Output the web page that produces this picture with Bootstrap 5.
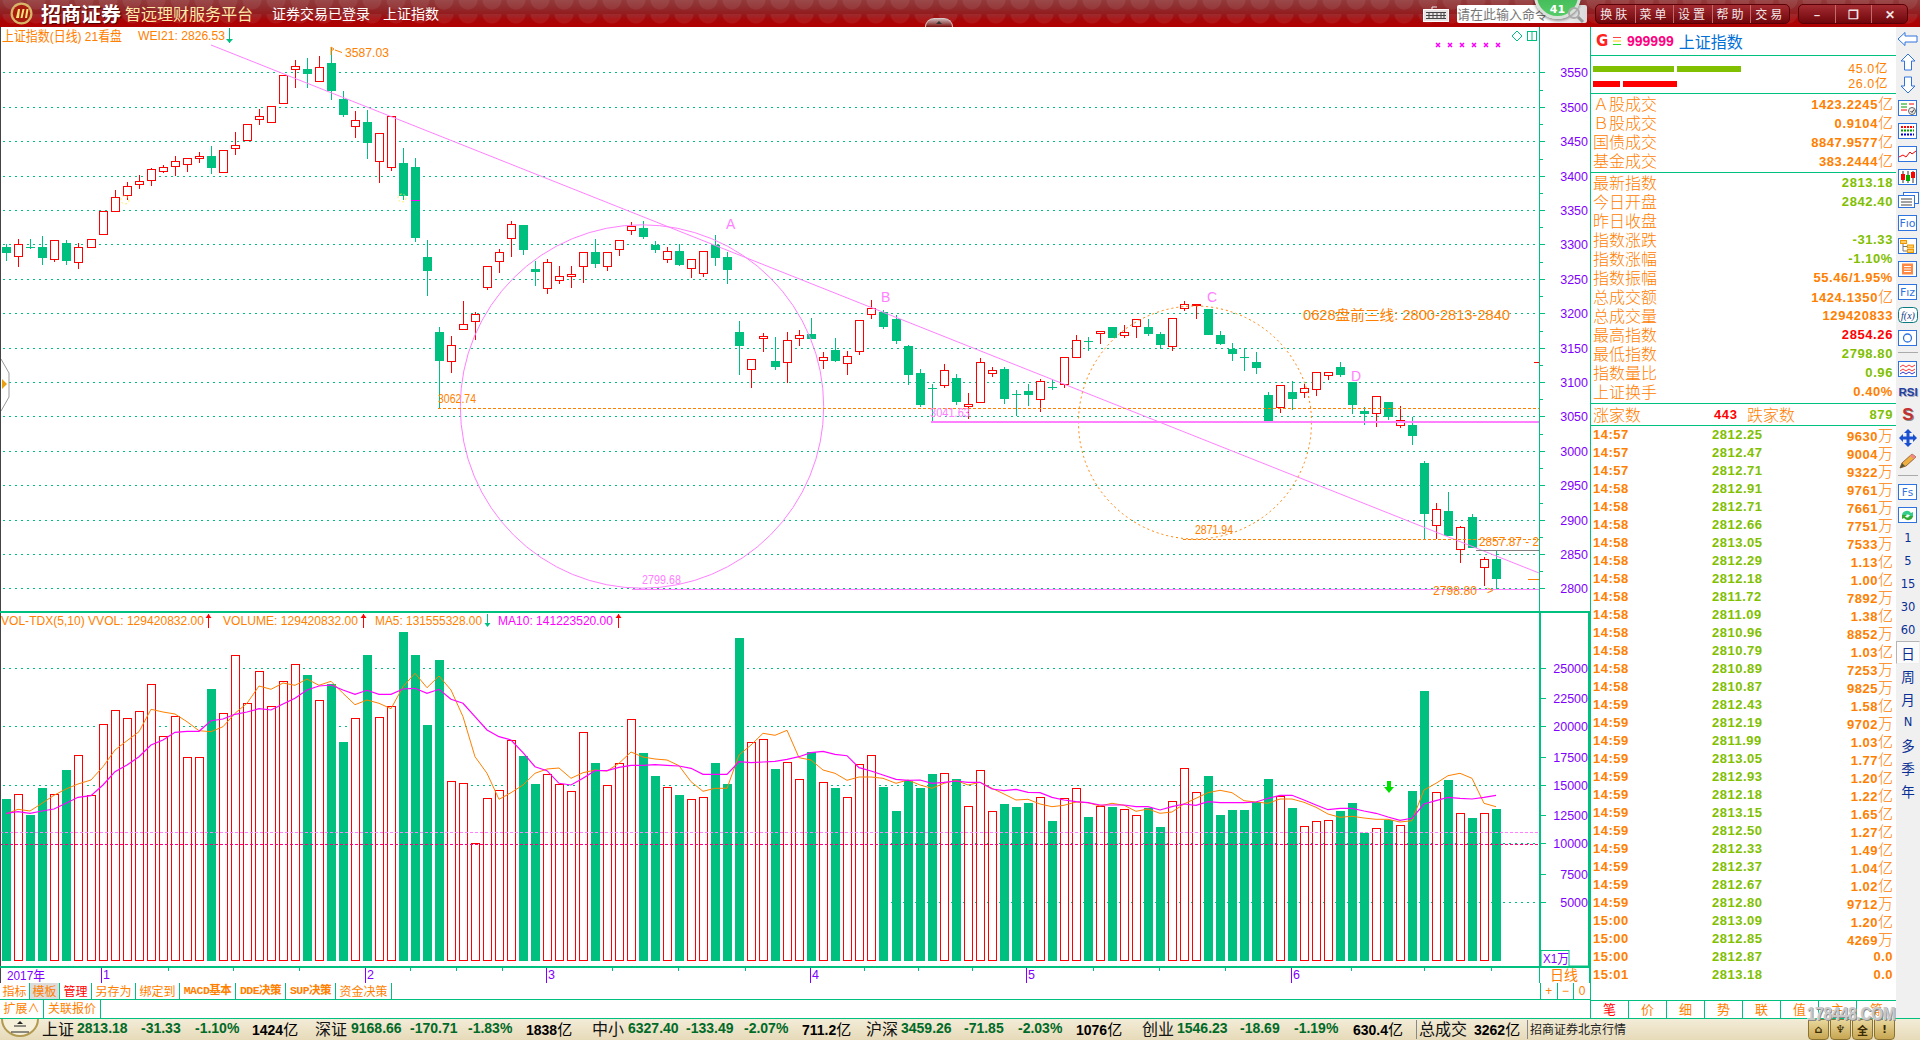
<!DOCTYPE html>
<html lang="zh">
<head>
<meta charset="utf-8">
<title>招商证券 智远理财服务平台</title>
<link href="https://cdn.jsdelivr.net/npm/bootstrap@5.3.0/dist/css/bootstrap.min.css" rel="stylesheet">
<style>
html,body{height:1040px;overflow:hidden;background:#fff;}
body{font-family:"Liberation Sans","Noto Sans CJK SC",sans-serif;font-size:13px;color:#ff8000;}
.cjk{font-family:"Noto Sans CJK SC",sans-serif;}
.app-shell{width:1920px;height:1040px;position:relative;overflow:hidden;}
/* title bar */
.title-bar{height:27px;position:relative;background:
 radial-gradient(circle at 12px 0,rgba(255,255,255,.07) 0 9px,transparent 10px) 0 0/24px 14px,
 linear-gradient(#923b3c 0,#8f2a2c 30%,#96181b 55%,#a70507 75%,#b30000 100%);color:#fff;}
.brand-logo{margin-left:10px;width:23px;height:23px;}
.brand-name{margin-left:8px;width:81px;font:700 20px/27px "Noto Sans CJK SC",sans-serif;letter-spacing:0;text-shadow:1px 1px 1px #400;}
.brand-sub{margin-left:3px;width:147px;font:400 16px/27px "Noto Sans CJK SC",sans-serif;color:#ffe9a8;}
.brand-state{width:111px;font:400 14px/27px "Noto Sans CJK SC",sans-serif;}
.brand-index{font:400 14px/27px "Noto Sans CJK SC",sans-serif;}
.notch{position:absolute;left:925px;top:18px;width:28px;height:9px;border-radius:14px 14px 0 0;background:linear-gradient(#c9b3b3,#7a0d0d);border:1px solid #d8c8c8;border-bottom:0;}
.notch::after{content:"";position:absolute;left:10px;top:2px;border:3px solid transparent;border-bottom-color:#333;border-top:0;}
.kbd-icon{position:absolute;left:1423px;top:6px;}
.cmd-box{position:absolute;left:1457px;top:5px;width:130px;height:18px;background:linear-gradient(90deg,#fff 70%,#d9d9d9);border-radius:2px;color:#777;font:400 13px/18px "Noto Sans CJK SC",sans-serif;overflow:hidden;white-space:nowrap;}
.cmd-glass{position:absolute;left:1566px;top:6px;}
.msg-ball{position:absolute;left:1534px;top:-28px;width:47px;height:47px;border-radius:50%;background:linear-gradient(#2fa84a,#55cc66);border:3px solid #d9dfd9;box-shadow:0 2px 3px rgba(0,0,0,.4);color:#fff;font:700 11px/1 "DejaVu Sans",sans-serif;text-align:center;padding-top:29px;}
.win-group{position:absolute;top:4px;height:20px;display:flex;border:1px solid #5a0006;border-radius:5px;background:linear-gradient(#a32c32,#6f060b);overflow:hidden;}
.win-group span{display:block;border-left:1px solid #c46a6a;text-align:center;color:#f2e4e4;font:400 12px/18px "Noto Sans CJK SC",sans-serif;letter-spacing:3px;}
.win-group span:first-child{border-left:0;}
.group-menu{left:1595px;width:195px;}
.group-menu span{width:39px;}
.group-win{left:1798px;width:110px;}
.group-win span{width:37px;font-weight:700;letter-spacing:0;}
/* body */
.main-area{height:992px;border-bottom:1px solid #00c080;}
.chart-col{width:1590px;}
.chart-svg{display:block;width:1590px;height:956px;}
.tool-row{display:flex;border-bottom:1px solid #00c080;font:400 12px/16px "Noto Sans CJK SC",sans-serif;color:#ff8000;white-space:nowrap;}
.tool-a{height:17px;}
.tool-b{height:18px;border-bottom:0;}
.tool-cell{display:block;text-align:center;border-right:1px solid #00c080;}
.tool-cell.sel{background:#dcdcdc;color:#ff8000;}
.tool-cell.warn{color:#f00;}
.tool-mono{font:700 11.5px/16px "Liberation Mono","Noto Sans CJK SC",monospace;letter-spacing:-.5px;}
.tool-end{margin-left:auto;width:50px;display:flex;border-left:1px solid #00c080;}
.tool-end span{flex:1;text-align:center;border-right:1px solid #00c080;font-family:"Liberation Sans",sans-serif;}
.tool-end span:last-child{border-right:0;}
/* info */
.info-col{width:306px;border-left:1px solid #00c080;}
.sec{border-bottom:1px solid #00c080;padding:0 3px 0 2px;}
.sec-head{height:29px;padding-left:5px;align-items:center;}
.code-g{color:#f22;font:700 15px "DejaVu Sans",sans-serif;width:17px;}
.code-lines{width:8px;margin:0 6px 0 0;}
.code-num{color:#ff0080;font:700 14px "Liberation Sans",sans-serif;margin-right:5px;}
.code-name{color:#0070d8;font:400 16px "Noto Sans CJK SC",sans-serif;}
.sec-bars{height:38px;position:relative;}
.bar-row{display:flex;height:15px;align-items:center;}
.bar-seg{height:6px;margin-right:3px;}
.seg-g{background:#80c000;}
.seg-r{background:#f00;}
.w81{width:81px;}.w64{width:64px;}.w27{width:27px;}.w54{width:54px;}
.bar-num{margin-left:auto;margin-right:5px;font-size:12.5px;letter-spacing:.6px;}
.bar-wrap{padding-top:5px;}
.row-19{height:19px;line-height:19px;display:flex;justify-content:space-between;}
.lbl{font:300 16px/19px "Noto Sans CJK SC",sans-serif;letter-spacing:0;}
.val{font:700 13px/19px "Liberation Sans",sans-serif;letter-spacing:.6px;}
.val i,.tk-v i{font:300 15px/18px "Noto Sans CJK SC",sans-serif;letter-spacing:0;}
.c-g{color:#80c000;}.c-r{color:#f00;}.c-o{color:#ff8000;}
.sec-st{height:79px;}
.sec-in{height:231px;}
.sec-ud{height:22px;padding-top:1px;}
.ud-a{width:121px;}
.ud-b{width:91px;text-align:left;}
.tk-list{height:558px;padding:0 3px 0 2px;}
.tk-row{height:18px;line-height:18px;font:700 13px/18px "Liberation Sans",sans-serif;letter-spacing:.5px;display:flex;}
.tk-t{width:119px;}
.tk-p{width:100px;color:#80c000;}
.tk-v{flex:1;text-align:right;}
.tab-row{height:18px;border-top:1px solid #00c080;margin-top:auto;display:flex;font:400 13px/16px "Noto Sans CJK SC",sans-serif;}
.tab-row span{width:38px;text-align:center;border-right:1px solid #00c080;}
.tab-row span:last-child{border-right:0;width:39px;}
.watermark{position:absolute;left:1807px;top:1005px;color:#c8c8c8;font:700 18px/1 "Liberation Sans",sans-serif;letter-spacing:-.3px;text-shadow:1px 1px 0 #888,-1px 0 0 #eee;transform:scaleX(.85);transform-origin:left center;white-space:nowrap;}
/* side */
.side-col{width:24px;background:#f0f0f0;}
.side-cell{height:23px;display:flex;align-items:center;justify-content:center;color:#0a2f94;font:400 11.5px "DejaVu Sans",sans-serif;}
.side-cell.cjk{font:400 13.5px "Noto Sans CJK SC",sans-serif;}
.side-cell.on{background:#fafafa;border:1px solid #b5b5b5;border-right-color:#eee;border-bottom-color:#eee;}
.side-sep{height:8px;position:relative;}
.side-sep::after{content:"";position:absolute;left:2px;right:2px;top:3px;border-top:1px solid #aaa;}
/* status */
.status-bar{height:21px;background:linear-gradient(#f3ecd8,#e6dab8);color:#000;white-space:nowrap;position:relative;line-height:19px;}
.st-item{display:block;flex:none;overflow:visible;}
.st-cn{font:400 16px/19px "Noto Sans CJK SC",sans-serif;color:#111;}
.st-num{font:700 14px/19px "Liberation Sans",sans-serif;color:#006a28;}
.st-amt{font:700 14px/19px "Liberation Sans",sans-serif;color:#000;}
.st-amt i{font:400 15px/19px "Noto Sans CJK SC",sans-serif;}
.st-sep{border-left:1px solid #888;height:19px;margin-top:1px;}
.st-home{font:400 12px/20px "Noto Sans CJK SC",sans-serif;color:#222;}
.st-icons{position:absolute;left:1808px;top:0;display:flex;gap:1px;}
.st-ico{width:21px;height:21px;background:linear-gradient(#e8d79c,#c7a652);border:1px solid #8a7230;border-radius:0 0 4px 4px;display:flex;align-items:center;justify-content:center;color:#3a2a00;font:700 11px "DejaVu Sans","Noto Sans CJK SC",sans-serif;}
</style>
</head>
<body class="m-0 p-0">
<div class="app-shell d-flex flex-column">

<header class="title-bar d-flex align-items-center flex-shrink-0">
  <svg class="brand-logo" viewBox="0 0 23 23"><circle cx="11.5" cy="11.5" r="11" fill="#d9b56a"/><circle cx="11.5" cy="11.5" r="8.7" fill="#a81c10"/><path d="M6 16 8 7h2l-1 9zM10.500 16l2-9h2l-2 9zM15 16l1.500-9h2l-1.500 9z" fill="#ffe27a"/></svg>
  <div class="brand-name">招商证券</div>
  <div class="brand-sub">智远理财服务平台</div>
  <div class="brand-state">证券交易已登录</div>
  <div class="brand-index">上证指数</div>
  <div class="notch"></div>
  <svg class="kbd-icon" width="26" height="16" viewBox="0 0 26 16"><rect x=".5" y="3.500" width="25" height="12" fill="#e9e4e4" stroke="#fff"/><path d="M3 6.500h20M3 9.500h20M3 12.500h20M6 6v7M10 6v7M14 6v7M18 6v7M21 6v7" stroke="#444" stroke-width="1"/><path d="M9 3V1h5" stroke="#eee" fill="none"/></svg>
  <div class="cmd-box">请在此输入命令</div>
  <div class="msg-ball">41</div>
  <svg class="cmd-glass" width="20" height="18" viewBox="0 0 20 18"><circle cx="8" cy="7" r="5" fill="none" stroke="#aaa" stroke-width="2"/><path d="M12 11l5 5" stroke="#999" stroke-width="3"/></svg>
  <div class="win-group group-menu"><span>换肤</span><span>菜单</span><span>设置</span><span>帮助</span><span>交易</span></div>
  <div class="win-group group-win"><span>–</span><span>❐</span><span>✕</span></div>
</header>

<main class="main-area d-flex flex-shrink-0">
  <section class="chart-col d-flex flex-column flex-shrink-0">
    <svg id="chart" class="chart-svg" viewBox="0 27 1590 956" xmlns="http://www.w3.org/2000/svg"></svg>
    <div class="tool-row tool-a" id="toolA"></div>
    <div class="tool-row tool-b">
      <span class="tool-cell" style="width:44px">扩展∧</span>
      <span class="tool-cell" style="width:57px">关联报价</span>
    </div>
  </section>

  <aside class="info-col d-flex flex-column flex-shrink-0">
    <div class="sec sec-head d-flex">
      <span class="code-g">G</span>
      <svg class="code-lines" width="8" height="10" viewBox="0 0 8 10"><path d="M0 1.500h8" stroke="#f44"/><path d="M0 5h8" stroke="#fc0"/><path d="M0 8.500h8" stroke="#2d2"/></svg>
      <span class="code-num">999999</span><span class="code-name">上证指数</span>
    </div>
    <div class="sec sec-bars bar-wrap">
      <div class="bar-row"><span class="bar-seg seg-g w81"></span><span class="bar-seg seg-g w64"></span><span class="bar-num cjk-mix">45.0<i class="cjk fst-normal">亿</i></span></div>
      <div class="bar-row"><span class="bar-seg seg-r w27"></span><span class="bar-seg seg-r w54"></span><span class="bar-num">26.0<i class="cjk fst-normal">亿</i></span></div>
    </div>
    <div class="sec sec-st" id="stockRows"></div>
    <div class="sec sec-in" id="indexRows"></div>
    <div class="sec sec-ud d-flex">
      <span class="lbl ud-a">涨家数</span>
      <span class="val c-r" style="width:33px">443</span>
      <span class="lbl ud-b">跌家数</span>
      <span class="val c-g flex-grow-1 text-end">879</span>
    </div>
    <div class="tk-list" id="ticks"></div>
    <div class="tab-row"><span class="c-r">笔</span><span>价</span><span>细</span><span>势</span><span>联</span><span>值</span><span>主</span><span>筹</span></div>
  </aside>

  <nav class="side-col d-flex flex-column flex-shrink-0 pt-0" id="side"></nav>
</main>

<footer class="status-bar d-flex flex-shrink-0" id="status"></footer>
<div class="watermark">178448.COM</div>
</div>

<script src="https://cdn.jsdelivr.net/npm/bootstrap@5.3.0/dist/js/bootstrap.bundle.min.js"></script>
<script>
(function(){
var G='#00c080',R='#ff0000',O='#ff8000',P='#ff80ff',M='#ff00ff',V='#8000ff';
var X=function(i){return Math.round(6.4+12.015*i);};
/* first 35 candles read in zoomed units: y=20+v/3 */
var c0=[['g',682,698,672,722],['r',673,712,657,740],['g',680,683,657,687],['g',682,713,648,735],['r',661,721,661,725],['g',670,722,660,735],['r',682,730,670,746],['r',658,685,658,685],['r',574,646,574,646],['r',532,577,510,577],['r',497,529,487,540],['r',484,496,465,506],['r',448,484,444,497],['r',440,455,435,458],['r',424,440,408,468],['r',415,436,415,455],['r',409,418,396,428],['g',408,443,378,461],['r',391,460,391,460],['r',376,388,336,404],['r',313,364,313,364],['r',287,301,267,314],['r',259,310,259,310],['r',166,253,166,253],['r',139,151,120,203],['g',148,161,114,203],['r',142,187,108,187],['g',129,213,85,239],['g',237,285,213,291],['r',301,322,273,353],['g',306,368,270,416],['r',340,427,340,488],['r',287,445,287,452],['g',430,527,384,540],['g',441,653,414,665]];
var cs=c0.map(function(a){return [a[0],20+a[1]/3,20+a[2]/3,20+a[3]/3,20+a[4]/3];});
cs=cs.concat([
['g',257,271,240,296],['g',332,361,327,408],['r',345,362,336,373],['r',324,330,301,330],['r',314,322,312,340],['r',266,288,266,290],['r',252,262,249,273],['r',224,239,221,257],['g',225,250,225,255],['g',269,272,261,286],['r',262,289,259,294],['r',276,281,266,284],['r',274,276,266,288],['r',252,267,252,283],['g',252,264,239,268],['r',252,267,252,271],['r',240,250,240,256],
['r',226,231,222,235],['g',228,237,221,239],['g',245,250,241,253],['r',251,260,247,263],['g',251,265,244,266],['r',259,269,259,278],['r',251,274,251,277],['g',245,258,235,266],['g',257,270,252,284],['g',332,346,321,375],['r',359,370,359,388],['r',336,338,333,352],['g',361,367,337,370],['r',340,363,332,383],['r',335,339,330,346],['g',334,339,318,339],
['r',357,361,352,369],['g',350,361,338,362],['r',356,364,351,375],['r',320,352,320,355],['r',308,315,300,319],['g',312,327,310,329],['g',319,341,315,344],['g',346,375,345,385],['g',373,405,369,407],['g',388,389,384,422],['r',370,386,364,388],['g',378,402,374,405],['r',404,407,393,419],['r',362,403,358,403],['r',370,374,367,377],['g',369,399,367,404],['g',394,395,390,416],['g',391,395,384,406],['r',381,400,379,412],['g',387,388,380,390],['r',357,385,357,388],['r',340,358,335,358],['g',341,342,337,351],['r',331,334,331,344],['g',327,338,327,338],['r',332,336,325,338],['r',319,327,319,338],['g',327,334,319,336],['g',334,345,332,349],['r',318,347,318,351],['r',304,309,301,311],['r',304,305,304,319],['g',309,335,309,335],['g',335,344,331,345],['g',349,354,343,361],['g',357,358,348,371],['g',362,368,352,374],['g',395,422,392,422],['r',385,408,385,413],['g',392,399,381,410],['r',388,393,384,398],['r',372,390,372,396],['r',372,376,372,380],['g',367,375,362,377],['g',382,405,382,414],['g',411,414,407,425],['r',396,414,396,427],['g',402,417,402,420],['r',420,426,406,428],['g',425,436,417,445],['g',463,514,461,539],['r',509,526,503,539],['g',511,536,492,536],['r',527,550,526,563],['g',517,548,514,548],['r',559,568,557,586],['g',559,579,551,589]]);
/* volume tops in zoomed units: y=610+v/3 */
var vol=[['g',567],['r',553],['g',615],['g',534],['r',553],['g',480],['r',436],['r',556],['r',343],['r',301],['r',325],['r',304],['r',223],['r',379],['r',319],['r',442],['r',442],['g',237],['r',310],['r',136],['r',280],['r',184],['r',289],['r',214],['r',163],['g',195],['r',271],['g',222],['g',396],['r',325],['g',135],['r',322],['r',289],['g',66],['g',135],['g',345],['g',150],['r',514],['r',520],['r',700],['r',565],['r',541],['r',391],['g',438],['g',522],['r',493],['r',523],['r',544],['r',367],['g',459],['r',526],['r',460],['r',328],['g',429],['g',498],['r',532],['g',555],['r',568],['r',562],['g',459],['g',522],['g',84],['r',397],['r',388],['g',477],['r',456],['r',508],
['g',426],['r',517],['g',534],['r',562],['r',463],['r',436],['g',531],['g',603],['g',513],['g',534],['g',492],['r',490],['g',507],['r',589],['r',481],['r',604],['g',582],['g',591],['g',579],['r',562],['g',633],['r',565],['r',535],['g',621],['r',589],['g',591],['r',598],['r',616],['g',593],['g',651],['r',574],['r',475],['r',547],['g',498],['g',615],['g',600],['g',600],['g',575],['g',507],['r',558],['g',594],['r',649],['r',634],['r',631],['g',603],['g',579],['g',669],['r',655],['g',630],['r',646],['g',543],['g',243],['r',547],['g',510],['r',610],['g',624],['r',610],['g',597]];
var ma5=[612,598,603,580,556,537,522,510,470,420,392,365,298,306,312,335,362,365,350,310,280,228,238,219,226,207,226,214,250,284,270,280,296,230,190,233,198,240,320,440,490,568,548,525,490,477,474,505,488,480,483,460,426,441,447,450,467,515,544,535,535,435,405,370,376,361,443,450,480,490,511,501,501,505,520,510,525,535,520,511,525,517,535,552,570,568,582,590,586,576,578,588,580,586,604,597,610,606,582,565,548,541,548,572,576,580,567,567,577,592,612,622,619,624,628,628,636,632,540,520,497,490,505,580,590];
var ma10=[610,605,610,603,597,580,562,557,525,485,465,440,405,390,367,364,364,332,327,313,306,296,300,282,265,240,228,225,240,253,241,253,253,237,235,250,238,268,280,320,360,380,390,428,470,482,520,525,505,482,482,472,466,466,464,466,468,475,493,493,493,455,458,456,454,448,440,428,424,433,437,473,483,495,508,511,510,520,517,513,517,517,537,542,538,547,548,562,570,575,578,585,585,585,590,590,600,590,582,586,575,578,578,578,576,565,556,556,570,585,599,595,595,603,610,621,631,625,582,572,562,565,567,562,556];

var h=[];
function line(x1,y1,x2,y2,c,extra){h.push('<line x1="'+x1+'" y1="'+y1+'" x2="'+x2+'" y2="'+y2+'" stroke="'+c+'" '+(extra||'')+'/>');}
function hl(x1,y,x2,c,extra){line(x1,y+.5,x2,y+.5,c,(extra||'')+' shape-rendering="crispEdges"');}
function vl(x,y1,y2,c){line(x+.5,y1,x+.5,y2,c,'shape-rendering="crispEdges"');}
function txt(x,y,s,c,size,len,anchor,fam){
  h.push('<text x="'+x+'" y="'+y+'" fill="'+c+'" font-size="'+size+'" font-family="'+(fam||'Liberation Sans,Noto Sans CJK SC,sans-serif')+'" dominant-baseline="central"'+(anchor?' text-anchor="'+anchor+'"':'')+(len?' textLength="'+len+'" lengthAdjust="spacingAndGlyphs"':'')+'>'+s+'</text>');
}
var dot='stroke-dasharray="2 4"';
/* price grid and axis */
var gy=[72,107,141,176,210,244,279,313,348,382,416,451,485,520,554,588];
gy.forEach(function(y,k){
  hl(3,y,1539,G,dot);
  hl(1539,y,1545,G);
  if(k<gy.length-1){hl(1539,Math.round((y+gy[k+1])/2),1543,G);}
  txt(1588,y+.5,3550-50*k,V,12.5,null,'end');
});
vl(1539,27,612,G);
/* volume pane grid */
var vy=[668,698,726,757,785,815,843,874,902];
var vl2=[25000,22500,20000,17500,15000,12500,10000,7500,5000];
[668,726,785,902].forEach(function(y){hl(3,y,1539,G,dot);});
hl(3,843,1539,G,dot);
vy.forEach(function(y,k){hl(1541,y,1546,G);txt(1588,y+.5,vl2[k],V,12.5,null,'end');});
/* volume bars */
vol.forEach(function(v,i){
  var x=X(i)-4,y=Math.round(610+v[1]/3);
  if(v[0]=='g'){h.push('<rect x="'+x+'" y="'+y+'" width="9" height="'+(961-y)+'" fill="'+G+'" shape-rendering="crispEdges"/>');}
  else{h.push('<rect x="'+(x+.5)+'" y="'+(y+.5)+'" width="8" height="'+(960-y)+'" fill="#fff" stroke="'+R+'" shape-rendering="crispEdges"/>');}
});
/* candles */
cs.forEach(function(c,i){
  var x=X(i),col=c[0]=='g'?G:R,t=Math.round(c[1]),b=Math.max(Math.round(c[2]),t+1),wt=Math.round(c[3]),wb=Math.round(c[4]);
  vl(x,wt,wb,col);
  if(c[0]=='g'){h.push('<rect x="'+(x-4)+'" y="'+t+'" width="9" height="'+(b-t)+'" fill="'+G+'" shape-rendering="crispEdges"/>');}
  else{h.push('<rect x="'+(x-3.5)+'" y="'+(t+.5)+'" width="8" height="'+(b-t-(b-t>2?1:0))+'" fill="#fff" stroke="'+R+'" shape-rendering="crispEdges"/>');}
});
/* volume averages */
function poly(a,c,w){h.push('<polyline fill="none" stroke="'+c+'" stroke-width="'+w+'" points="'+a.map(function(v,i){return X(i)+','+(610+v/3).toFixed(1);}).join(' ')+'"/>');}
poly(ma5,O,1);poly(ma10,M,1.2);
hl(0,832,1539,P,'stroke-dasharray="3 2"');
hl(0,844,1539,'#ff0080','stroke-dasharray="3 2"');
/* drawings */
line(211,45,1539,573,P,'stroke-width="1"');
h.push('<circle cx="642" cy="406.500" r="181.700" fill="none" stroke="'+P+'"/>');
h.push('<circle cx="1195" cy="422.500" r="116.500" fill="none" stroke="'+O+'" stroke-dasharray="2 3"/>');
hl(438,408,1539,O,'stroke-dasharray="3 2"');
hl(931,422,1539,P);hl(931,421,1539,P);
hl(1183,539,1539,O,'stroke-dasharray="3 2"');
hl(1476,550,1539,'#808080');
hl(632,589,1539,P);
hl(1528,579,1539,O);
hl(1534,362,1539,R);
hl(X(34)-4,200,X(34)+5,M);
h.push('<circle cx="125" cy="200" r="4" fill="none" stroke="#ffee66" stroke-dasharray="2 2"/><circle cx="402" cy="198" r="4" fill="none" stroke="#ffee66" stroke-dasharray="2 2"/>');
/* labels */
txt(2,36,'上证指数(日线) 21看盘',O,13.5,120);
txt(138,36,'WEI21: 2826.53',O,12.5,87);
vl(229,28,43,G);h.push('<path d="M226 39h7l-3.500 4z" fill="'+G+'"/>');
txt(345,52.500,'3587.03',O,12.5,44);
h.push('<path d="M331 55V47l3 2-3 2M335 50l7 2.500" stroke="'+O+'" fill="none"/>');
txt(438,399,'3062.74',O,12,38);
txt(642,580,'2799.68',P,12,39);
txt(930,412.500,'3041.63',P,12,40);
txt(1195,530,'2871.94',O,12,38);
txt(1479,541.500,'2857.87 - 2',O,12,60);
txt(1433,590.500,'2798.80',O,12,44);
txt(1487,590,'&gt;',O,11);
txt(1303,315,'0628盘前三线: 2800-2813-2840',O,14,207);
txt(726,224,'A',P,14);txt(881,297,'B',P,14);txt(1207,297,'C',P,14);txt(1351,376,'D',P,14);
/* top right marks */
[1438,1450,1462,1474,1486,1498].forEach(function(x){h.push('<path d="M'+(x-2)+' 43l4 4M'+(x+2)+' 43l-4 4" stroke="'+M+'" stroke-width="1.500"/>');});
h.push('<path d="M1517 31l5 5-5 5-5-5z" fill="none" stroke="'+G+'"/><rect x="1527.500" y="31.500" width="9" height="9" fill="none" stroke="'+G+'"/><path d="M1532 32v8" stroke="'+G+'" stroke-width="1"/>');
/* left handle */
h.push('<path d="M1 359l8 14v24l-8 14" fill="#fff" stroke="#999"/><path d="M2 379l5 5-5 5z" fill="#e8a010"/>');
/* left frame */
vl(0,27,983,'#444');
/* pane text */
hl(0,612,1540,G);hl(0,611,1540,G);
txt(1,620.500,'VOL-TDX(5,10) VVOL: 129420832.00',O,12,203);
txt(223,620.500,'VOLUME: 129420832.00',O,12,135);
txt(375,620.500,'MA5: 131555328.00',O,12,107);
txt(498,620.500,'MA10: 141223520.00',M,12,115);
function upArrow(x){vl(x,614,628,R);h.push('<path d="M'+(x-2.500)+' 618h6l-3-4z" fill="'+R+'"/>');}
upArrow(208);upArrow(363);upArrow(618);
vl(487,614,626,G);h.push('<path d="M484.500 623h6l-3 4z" fill="'+G+'"/>');
/* green signal arrow */
h.push('<path d="M1387 781h4v6h3l-5 6-5-6h3z" fill="#00e000"/>');
/* volume axis box */
h.push('<rect x="1540" y="612" width="49" height="354.500" fill="none" stroke="'+G+'" stroke-width="2"/>');
h.push('<rect x="1541" y="950.500" width="28" height="16" fill="#fff" stroke="'+G+'"/>');
txt(1543,958,'X1万',V,13,26);
/* date axis */
hl(0,966,1540,G);hl(0,967,1590,G);
txt(7,975,'2017年',V,13,38);
[[101,'1'],[365,'2'],[546,'3'],[810,'4'],[1026,'5'],[1291,'6']].forEach(function(a){vl(a[0],968,983,V);txt(a[0]+2,975,a[1],V,12.5);});
[168,233,299,410,456,502,612,678,745,864,918,972,1093,1159,1225,1351,1424,1491].forEach(function(x){vl(x,968,971,G);});
vl(1539,967,983,G);vl(1589,967,983,G);
txt(1564,975,'日线',O,14,null,'middle');
document.getElementById('chart').innerHTML=h.join('');

/* toolbar */
var tools=[['指标',30],['模板',30,'sel'],['管理',32,'warn'],['另存为',44],['绑定到',44],['MACD基本',56,'tool-mono'],['DDE决策',50,'tool-mono'],['SUP决策',50,'tool-mono'],['资金决策',56]];
var ta=tools.map(function(t){return '<span class="tool-cell '+(t[2]||'')+'" style="width:'+t[1]+'px">'+t[0]+'</span>';}).join('');
document.getElementById('toolA').innerHTML=ta+'<div class="tool-end"><span>+</span><span>−</span><span>0</span></div>';

/* info rows */
function unit(v){return v.replace(/([亿万])/,'<i class="fst-normal">$1</i>');}
function rows(a){return a.map(function(r){return '<div class="row-19"><span class="lbl">'+r[0]+'</span><span class="val c-'+r[2]+'">'+unit(r[1])+'</span></div>';}).join('');}
document.getElementById('stockRows').innerHTML=rows([['Ａ股成交','1423.2245亿','o'],['Ｂ股成交','0.9104亿','o'],['国债成交','8847.9577亿','o'],['基金成交','383.2444亿','o']]);
document.getElementById('indexRows').innerHTML=rows([['最新指数','2813.18','g'],['今日开盘','2842.40','g'],['昨日收盘','','g'],['指数涨跌','-31.33','g'],['指数涨幅','-1.10%','g'],['指数振幅','55.46/1.95%','o'],['总成交额','1424.1350亿','o'],['总成交量','129420833','o'],['最高指数','2854.26','r'],['最低指数','2798.80','g'],['指数量比','0.96','g'],['上证换手','0.40%','o']]);
var tk='14:57 2812.25 9630万|14:57 2812.47 9004万|14:57 2812.71 9322万|14:58 2812.91 9761万|14:58 2812.71 7661万|14:58 2812.66 7751万|14:58 2813.05 7533万|14:58 2812.29 1.13亿|14:58 2812.18 1.00亿|14:58 2811.72 7892万|14:58 2811.09 1.38亿|14:58 2810.96 8852万|14:58 2810.79 1.03亿|14:58 2810.89 7253万|14:58 2810.87 9825万|14:59 2812.43 1.58亿|14:59 2812.19 9702万|14:59 2811.99 1.03亿|14:59 2813.05 1.77亿|14:59 2812.93 1.20亿|14:59 2812.18 1.22亿|14:59 2813.15 1.65亿|14:59 2812.50 1.27亿|14:59 2812.33 1.49亿|14:59 2812.37 1.04亿|14:59 2812.67 1.02亿|14:59 2812.80 9712万|15:00 2813.09 1.20亿|15:00 2812.85 4269万|15:00 2812.87 0.0|15:01 2813.18 0.0'.split('|');
document.getElementById('ticks').innerHTML=tk.map(function(r){var p=r.split(' ');return '<div class="tk-row"><span class="tk-t">'+p[0]+'</span><span class="tk-p">'+p[1]+'</span><span class="tk-v">'+unit(p[2])+'</span></div>';}).join('');

/* side toolbar */
var B='#2f73e0';
function box(inner){return '<svg width="22" height="18" viewBox="0 0 22 18"><rect x="1.500" y="1.500" width="18" height="15" fill="#fff" stroke="'+B+'"/>'+inner+'</svg>';}
function boxTxt(s,sz,c){return box('<text x="10.500" y="13" font-size="'+(sz||11)+'" text-anchor="middle" fill="'+(c||B)+'" font-family="DejaVu Sans,sans-serif">'+s+'</text>');}
var icons=[
'<svg width="22" height="16" viewBox="0 0 22 16"><path d="M1 8l7-6.500V5h12v6H8v3.500z" fill="#fff" stroke="'+B+'"/></svg>',
'<svg width="18" height="18" viewBox="0 0 18 18"><path d="M9 1l7 7h-3.500v9h-7V8H2z" fill="#fff" stroke="'+B+'"/></svg>',
'<svg width="18" height="18" viewBox="0 0 18 18"><path d="M9 17l7-7h-3.500V1h-7v9H2z" fill="#fff" stroke="'+B+'"/></svg>',
box('<path d="M4 5h6M4 8h6" stroke="#090"/><path d="M4 11h6" stroke="#f00"/><path d="M12 5h5" stroke="#f00"/><circle cx="15" cy="12" r="3.500" fill="#eee" stroke="#666"/><path d="M13.500 12l1.500 1.500 2-3" stroke="#333" fill="none"/>'),
box('<path d="M4 5h13" stroke="#f00" stroke-width="2" stroke-dasharray="2 1"/><path d="M4 8.500h13" stroke="#090" stroke-width="2" stroke-dasharray="2 1"/><path d="M4 12.500h13" stroke="#00c" stroke-width="2" stroke-dasharray="2 1"/>'),
box('<path d="M2 12l4-2 3 2 4-5 2 2 4-3" stroke="#f00" fill="none"/>'),
box('<path d="M6 3v12M11 3v12M16 3v12" stroke="#333"/><rect x="4" y="6" width="4" height="6" fill="#f00"/><rect x="9" y="7" width="4" height="6" fill="#0a0"/><rect x="14" y="4" width="4" height="6" fill="#f00"/>'),
'<svg width="22" height="18" viewBox="0 0 22 18"><rect x="6.500" y="1.500" width="15" height="11" fill="#fff" stroke="'+B+'"/><rect x="1.500" y="4.500" width="16" height="12" fill="#fff" stroke="'+B+'"/><path d="M4 8h11M4 11h11M4 14h11" stroke="#444"/></svg>',
boxTxt('Fıo'),
box('<rect x="3.500" y="3.500" width="6" height="3" fill="#fc6" stroke="#e90"/><rect x="10.500" y="8" width="6" height="3" fill="#fc6" stroke="#e90"/><rect x="10.500" y="12.500" width="6" height="3" fill="#fc6" stroke="#e90"/><path d="M6 7v7h4M6 9.500h4" stroke="#777" fill="none"/>'),
box('<rect x="5" y="3.500" width="11" height="11" fill="#f84"/><path d="M7 6.500h7M7 9h7M7 11.500h7" stroke="#fff"/>'),
boxTxt('Fız'),
'<svg width="22" height="18" viewBox="0 0 22 18"><rect x="1.500" y="1.500" width="19" height="15" rx="4" fill="#fff" stroke="#0a7a80"/><text x="11" y="13" font-size="10" text-anchor="middle" fill="#0a3a80" font-style="italic" font-family="Liberation Serif,serif">f(x)</text></svg>',
box('<circle cx="10.500" cy="9" r="4" fill="none" stroke="'+B+'" stroke-width="1.300"/>'),
'sep',
box('<path d="M3 7l3-2 3 2 3-2 3 2 3-2M3 11l3-2 3 2 3-2 3 2 3-2" stroke="#f33" fill="none"/><path d="M3 14l3-2 3 2 3-2 3 2 3-2" stroke="#33c" fill="none"/>'),
'<span class="fw-bold" style="font:700 11.500px Liberation Sans,sans-serif;color:#2040a0;text-shadow:1px 1px 0 #aab">RSI</span>',
'<span style="font:700 17px Liberation Sans,sans-serif;color:#c43030;text-shadow:1px 1px 0 #888">S</span>',
'<svg width="20" height="20" viewBox="0 0 20 20"><path d="M10 1l4 4h-2.500v3.500H15V6l4 4-4 4v-2.500h-3.500V15H14l-4 4-4-4h2.500v-3.500H5V14l-4-4 4-4v2.500h3.500V5H6z" fill="#1a50d0"/></svg>',
'<svg width="20" height="18" viewBox="0 0 20 18"><path d="M2 16l2-5L14 2l4 3-10 9z" fill="#f0b040" stroke="#964"/><path d="M14 2l4 3-2 2-4-3z" fill="#e88"/><path d="M2 16l2-5 3 3z" fill="#553"/></svg>',
'sep',
boxTxt('Fs',10.500),
box('<path d="M5 9a5 5 0 0 1 9-2l2-1v5h-5l2-1.500a3 3 0 0 0-5 .500z" fill="#3c8"/><path d="M16 10a5 5 0 0 1-9 2l-2 1V9h5l-2 1.500a3 3 0 0 0 5-.500z" fill="#3a3"/>'),
'1','5','15','30','60'];
var sh=icons.map(function(s){return s=='sep'?'<div class="side-sep"></div>':'<div class="side-cell">'+s+'</div>';}).join('');
sh+='<div class="side-cell cjk on">日</div><div class="side-cell cjk">周</div><div class="side-cell cjk">月</div><div class="side-cell">N</div><div class="side-cell cjk">多</div><div class="side-cell cjk">季</div><div class="side-cell cjk">年</div>';
document.getElementById('side').innerHTML=sh;

/* status bar: start positions read from the picture */
var st=[[42,'上证','st-cn'],[77,'2813.18','st-num'],[141,'-31.33','st-num'],[195,'-1.10%','st-num'],[252,'1424亿','st-amt'],[315,'深证','st-cn'],[351,'9168.66','st-num'],[410,'-170.71','st-num'],[468,'-1.83%','st-num'],[526,'1838亿','st-amt'],[592,'中小','st-cn'],[628,'6327.40','st-num'],[686,'-133.49','st-num'],[744,'-2.07%','st-num'],[802,'711.2亿','st-amt'],[866,'沪深','st-cn'],[901,'3459.26','st-num'],[964,'-71.85','st-num'],[1018,'-2.03%','st-num'],[1076,'1076亿','st-amt'],[1142,'创业','st-cn'],[1177,'1546.23','st-num'],[1240,'-18.69','st-num'],[1294,'-1.19%','st-num'],[1353,'630.4亿','st-amt'],[1416,'','st-sep'],[1419,'总成交','st-cn'],[1474,'3262亿','st-amt'],[1527,'','st-sep'],[1530,'招商证券北京行情','st-home'],[1808,'','']];
var sb='<div class="st-item" style="width:42px"><svg width="42" height="21" viewBox="0 0 42 21"><path d="M2 0a18 17 0 0 0 36 0" fill="#f6f0da" stroke="#b29a50" stroke-width="2"/><path d="M14 7h12M11 13h18" stroke="#222"/><path d="M20 2l3 3h-6z" fill="#222"/></svg></div>';
st.forEach(function(s,i){
  if(i==st.length-1)return;
  var w=st[i+1][0]-s[0];
  sb+='<span class="st-item '+s[2]+'" style="width:'+w+'px">'+s[1].replace('亿','<i class="fst-normal">亿</i>')+'</span>';
});
sb+='<div class="st-icons"><span class="st-ico">⌂</span><span class="st-ico">♆</span><span class="st-ico">全</span><span class="st-ico">!</span></div>';
document.getElementById('status').innerHTML=sb;
})();
</script>
</body>
</html>
